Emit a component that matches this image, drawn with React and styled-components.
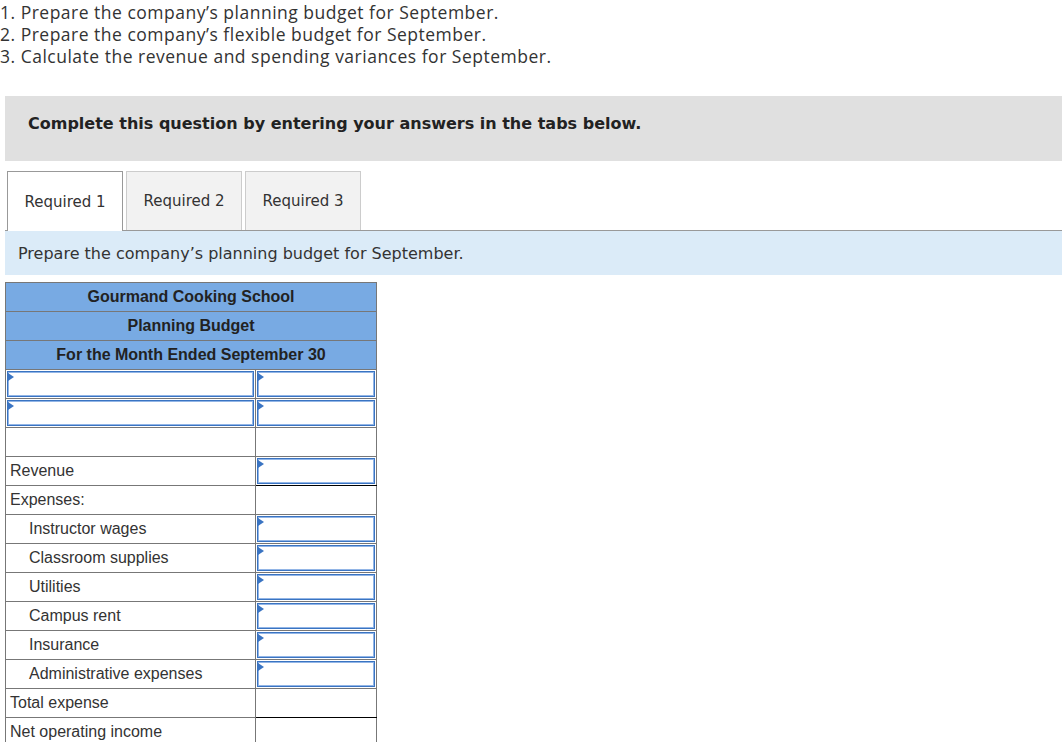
import styled, { createGlobalStyle } from "styled-components";

const GlobalStyle = createGlobalStyle`
    body {
        margin: 0;
        background: #fff;
        font-family: "Liberation Sans", Arial, sans-serif;
    }
`;

const rows = [
    { kind: "input" },
    { kind: "input" },
    { kind: "blank" },
    { label: "Revenue", value: true, underline: true },
    { label: "Expenses:" },
    { label: "Instructor wages", indent: true, value: true },
    { label: "Classroom supplies", indent: true, value: true },
    { label: "Utilities", indent: true, value: true },
    { label: "Campus rent", indent: true, value: true },
    { label: "Insurance", indent: true, value: true },
    { label: "Administrative expenses", indent: true, value: true },
    { label: "Total expense", underline: true },
    { label: "Net operating income" },
];

export default function App() {
    return (
        <>
            <GlobalStyle />
            <Page>
                <Questions>
                    <li>1. Prepare the company’s planning budget for September.</li>
                    <li>2. Prepare the company’s flexible budget for September.</li>
                    <li>3. Calculate the revenue and spending variances for September.</li>
                </Questions>
                <Notice>Complete this question by entering your answers in the tabs below.</Notice>
                <TabBar>
                    <Tab $active>Required 1</Tab>
                    <Tab>Required 2</Tab>
                    <Tab>Required 3</Tab>
                </TabBar>
                <Instruction>Prepare the company’s planning budget for September.</Instruction>
                <Budget>
                    <colgroup>
                        <col style={{ width: "250px" }} />
                        <col style={{ width: "121px" }} />
                    </colgroup>
                    <tbody>
                        <tr>
                            <HeadCell colSpan={2}>Gourmand Cooking School</HeadCell>
                        </tr>
                        <tr>
                            <HeadCell colSpan={2}>Planning Budget</HeadCell>
                        </tr>
                        <tr>
                            <HeadCell colSpan={2}>For the Month Ended September 30</HeadCell>
                        </tr>
                        {rows.map((row, i) => {
                            if (row.kind === "input") {
                                return (
                                    <tr key={i}>
                                        <Cell>
                                            <Entry />
                                        </Cell>
                                        <Cell>
                                            <Entry />
                                        </Cell>
                                    </tr>
                                );
                            }
                            if (row.kind === "blank") {
                                return (
                                    <tr key={i}>
                                        <Cell />
                                        <Cell />
                                    </tr>
                                );
                            }
                            return (
                                <tr key={i}>
                                    <Cell>
                                        <Label $indent={row.indent}>{row.label}</Label>
                                    </Cell>
                                    <Cell $underline={row.underline}>{row.value && <Entry />}</Cell>
                                </tr>
                            );
                        })}
                    </tbody>
                </Budget>
            </Page>
        </>
    );
}

const Page = styled.div`
    width: 1062px;
`;

const Questions = styled.ul`
    list-style: none;
    margin: 0;
    padding: 1px 0 0;
    font-family: "Open Sans", sans-serif;
    font-size: 17.5px;
    line-height: 22px;
    color: #333;
    li {
        letter-spacing: 0.5px;
        white-space: nowrap;
    }
`;

const Notice = styled.div`
    margin: 29px 0 0 5px;
    height: 65px;
    box-sizing: border-box;
    padding: 0 0 10px 23px;
    display: flex;
    align-items: center;
    background: #e0e0e0;
    font-family: "DejaVu Sans", Verdana, sans-serif;
    font-size: 16px;
    font-weight: bold;
    color: #222;
`;

const TabBar = styled.div`
    display: flex;
    gap: 3px;
    margin: 10px 0 0 5px;
    padding-left: 2px;
    border-bottom: 1px solid #999;
`;

const Tab = styled.div`
    width: 116px;
    box-sizing: border-box;
    display: flex;
    align-items: center;
    justify-content: center;
    font-family: "DejaVu Sans", Verdana, sans-serif;
    font-size: 15px;
    color: #333;
    border: 1px solid ${(p) => (p.$active ? "#999" : "#ccc")};
    border-bottom: none;
    background: ${(p) => (p.$active ? "#fff" : "#f2f2f2")};
    margin-bottom: ${(p) => (p.$active ? "-1px" : "0")};
    height: ${(p) => (p.$active ? "60px" : "59px")};
`;

const Instruction = styled.div`
    margin-left: 5px;
    height: 44px;
    box-sizing: border-box;
    padding-left: 13px;
    display: flex;
    align-items: center;
    background: #dbebf8;
    font-family: "DejaVu Sans", Verdana, sans-serif;
    font-size: 16px;
    color: #333;
`;

const Budget = styled.table`
    margin: 7px 0 0 5px;
    width: 372px;
    border-collapse: collapse;
    table-layout: fixed;
    font-family: "Liberation Sans", Arial, sans-serif;
    font-size: 16px;
    color: #333;
`;

const HeadCell = styled.td`
    height: 28px;
    padding: 0;
    border: 1px solid #777;
    background: #78aae3;
    text-align: center;
    font-weight: bold;
    color: #222;
`;

const Cell = styled.td`
    height: 28px;
    padding: 0;
    border: 1px solid #777;
    border-bottom: 1px solid ${(p) => (p.$underline ? "#000" : "#777")};
    position: relative;
    vertical-align: middle;
    white-space: nowrap;
`;

const Label = styled.span`
    display: block;
    padding-left: ${(p) => (p.$indent ? "23px" : "4px")};
`;

const Entry = styled.div`
    position: absolute;
    inset: 1px;
    border: 1px solid #3a74c2;
    box-shadow: inset 0 0 0 1px #92b5e6;
    background: #fff;
    &::before {
        content: "";
        position: absolute;
        left: 0;
        top: 1px;
        border-top: 4px solid transparent;
        border-bottom: 4px solid transparent;
        border-left: 6px solid #3a74c2;
    }
`;
